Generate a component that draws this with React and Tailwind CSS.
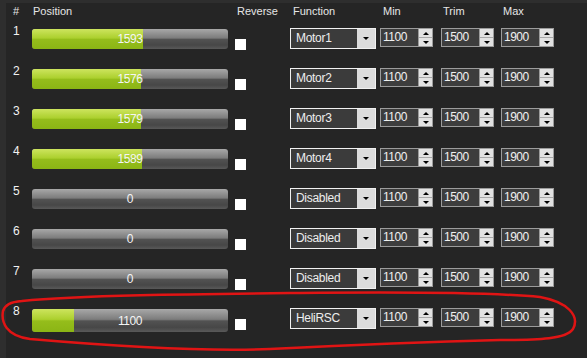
const rows = [
  { n: 1, value: 1593, fn: 'Motor1' },
  { n: 2, value: 1576, fn: 'Motor2' },
  { n: 3, value: 1579, fn: 'Motor3' },
  { n: 4, value: 1589, fn: 'Motor4' },
  { n: 5, value: 0, fn: 'Disabled' },
  { n: 6, value: 0, fn: 'Disabled' },
  { n: 7, value: 0, fn: 'Disabled' },
  { n: 8, value: 1100, fn: 'HeliRSC', tall: true },
]

// bar scale runs roughly 800..2200 across 196px
const barFill = (v) => Math.max(0, ((v - 800) / 1400) * 196)

function PositionBar({ value, tall }) {
  return (
    <div
      className={`relative mt-[5px] w-[196px] ${tall ? 'h-[23px]' : 'h-[20px]'} overflow-hidden rounded-[3px] bg-[linear-gradient(180deg,#a8a8a8_0%,#7c7c7c_45%,#525252_52%,#474747_80%,#595959_100%)]`}
    >
      <div
        className="h-full bg-[linear-gradient(180deg,#cde45e_0%,#acd02e_45%,#95bd1b_52%,#8bb515_100%)]"
        style={{ width: barFill(value) }}
      />
      <span className="absolute inset-0 flex items-center justify-center text-[12px] tracking-[-0.4px] text-[#f4f4f4]">
        {value}
      </span>
    </div>
  )
}

function FunctionCombo({ label }) {
  return (
    <div className="mt-[4px] flex h-[21px] w-[86px] border border-[#f2f2f2] bg-[#3b3b3b]">
      <span className="flex-1 pl-[5px] text-[12px] leading-[19px] tracking-[-0.3px] text-[#eeeeee]">{label}</span>
      <div className="flex w-[18px] items-center justify-center bg-[#dcdcdc]">
        <div className="h-0 w-0 border-x-[3px] border-t-[3px] border-x-transparent border-t-black" />
      </div>
    </div>
  )
}

function Spin({ value }) {
  return (
    <div className="mt-[4px] flex h-[19px] w-[53px] border border-[#9c9c9c] bg-[#3d3d3d]">
      <span className="flex-1 pl-[2px] text-[12px] leading-[17px] tracking-[-0.5px] text-[#f0f0f0]">{value}</span>
      <div className="flex w-[14px] flex-col border-l border-[#9c9c9c] bg-[#e2e2e2]">
        <div className="flex flex-1 items-center justify-center border-b border-[#a8a8a8]">
          <div className="h-0 w-0 border-x-[3px] border-b-[3px] border-x-transparent border-b-black" />
        </div>
        <div className="flex flex-1 items-center justify-center">
          <div className="h-0 w-0 border-x-[3px] border-t-[3px] border-x-transparent border-t-black" />
        </div>
      </div>
    </div>
  )
}

export default function App() {
  return (
    <div className="relative h-[358px] w-[587px] overflow-hidden bg-[#2e2e2e] font-['Liberation_Sans',Arial,sans-serif] text-[#e6e6e6]">
      <div className="ml-[6px] mt-[3px] h-[355px] bg-[#252525]">
        {/* header */}
        <div className="flex h-[21px] pt-[2px] text-[11px] leading-[13px]">
          <div className="w-[26px] pl-[7px]">#</div>
          <div className="w-[203px] pl-[1px]">Position</div>
          <div className="w-[55px] pl-[2px]">Reverse</div>
          <div className="w-[90px] pl-[3px]">Function</div>
          <div className="w-[61px] pl-[3px]">Min</div>
          <div className="w-[60px] pl-[2px]">Trim</div>
          <div className="pl-[2px]">Max</div>
        </div>

        {rows.map((r) => (
          <div key={r.n} className="flex h-[40px] items-start">
            <div className="w-[26px] pl-[7px] pt-[1px] text-[12px] leading-[13px] text-[#f2f2f2]">{r.n}</div>
            <div className="w-[203px]">
              <PositionBar value={r.value} tall={r.tall} />
            </div>
            <div className="w-[55px]">
              <div className="mt-[15px] h-[11px] w-[11px] bg-white" />
            </div>
            <div className="w-[90px]">
              <FunctionCombo label={r.fn} />
            </div>
            <div className="w-[61px]">
              <Spin value={1100} />
            </div>
            <div className="w-[60px]">
              <Spin value={1500} />
            </div>
            <div>
              <Spin value={1900} />
            </div>
          </div>
        ))}
      </div>

      {/* hand-drawn annotation around channel 8 */}
      <svg className="pointer-events-none absolute left-0 top-0" width="587" height="358" viewBox="0 0 587 358">
        <path
          d="M 22 301 C 80 295, 200 294, 300 293 C 400 292, 500 293, 540 297 C 568 302, 580 316, 573 329 C 566 339, 540 340, 500 340 C 420 342, 330 346, 270 349 C 200 352, 100 345, 30 339 C 6 336, 1 322, 3 311 C 5 305, 10 302, 22 301"
          fill="none"
          stroke="#e01414"
          strokeWidth="2.5"
          strokeLinecap="round"
        />
      </svg>
    </div>
  )
}
